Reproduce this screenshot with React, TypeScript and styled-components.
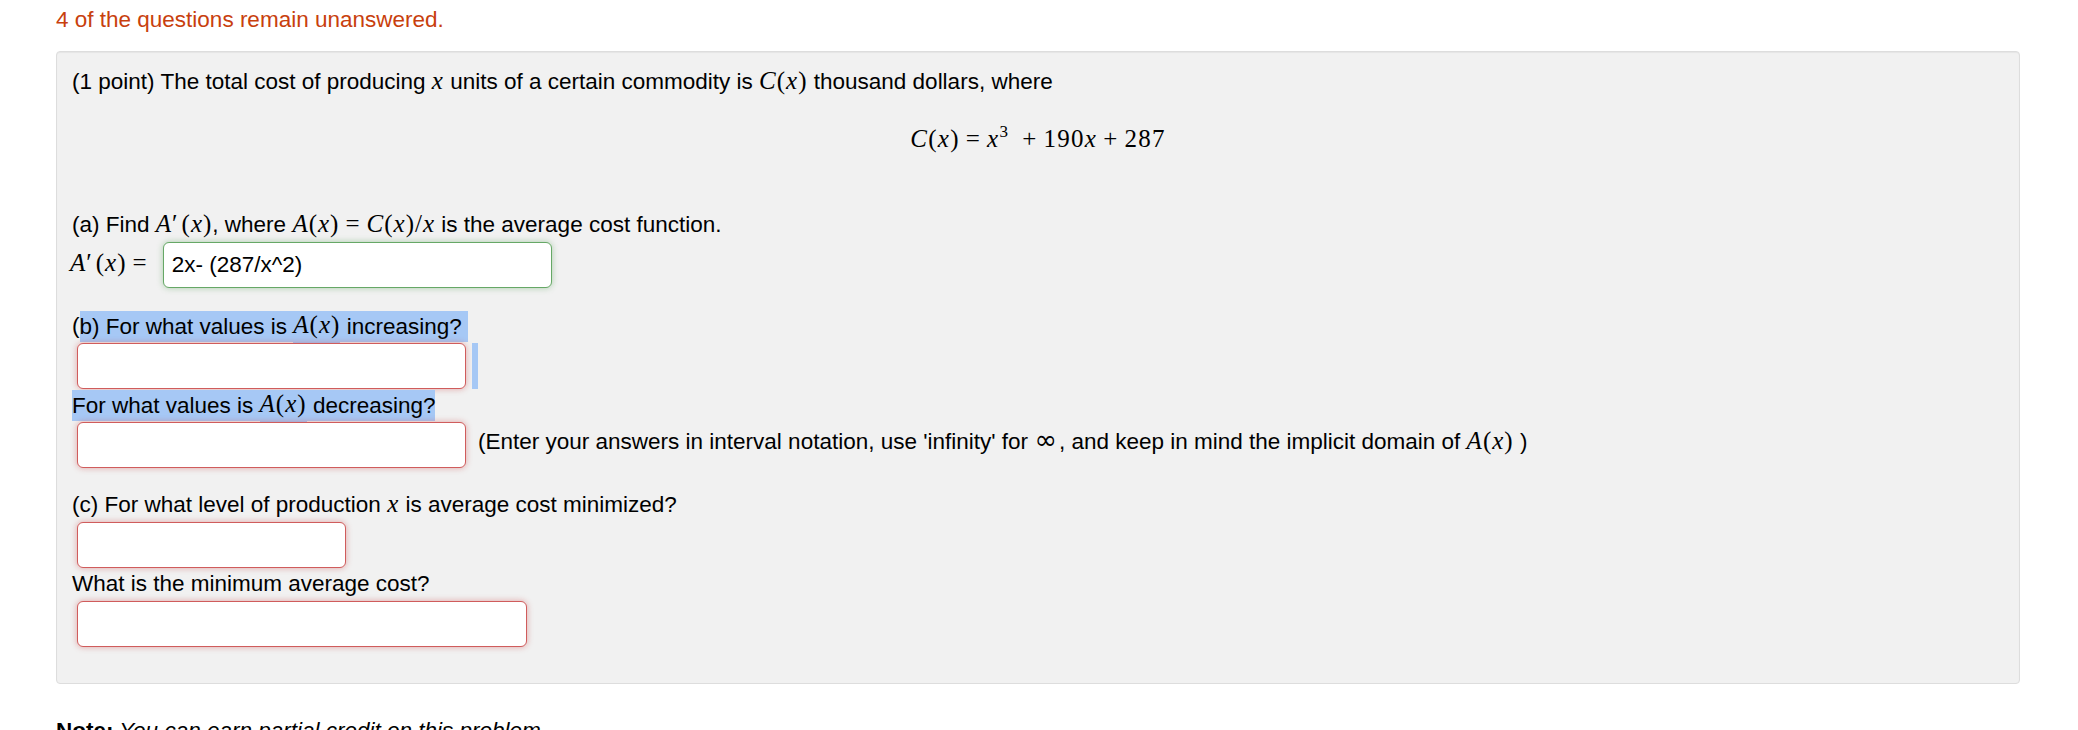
import React from "react";
import styled, { createGlobalStyle, css } from "styled-components";

const GlobalStyle = createGlobalStyle`
  html, body {
    margin: 0;
    padding: 0;
    background: #ffffff;
  }
  body {
    font-family: "Liberation Sans", Arial, Helvetica, sans-serif;
    font-size: 22.5px;
    color: #000000;
  }
`;

const selection = "#a6c8f5";

const Page = styled.div`
  box-sizing: border-box;
  width: 2078px;
  height: 730px;
  overflow: hidden;
  padding: 4px 58px 0 56px;
`;

const Warning = styled.div`
  color: #c8400d;
  line-height: 32px;
  margin-bottom: 15px;
`;

const Problem = styled.div`
  background: #f1f1f1;
  border: 1px solid #dddddd;
  border-radius: 4px;
  box-shadow: inset 0 1px 1px rgba(0, 0, 0, 0.05);
  padding: 14px 15px 36px;
`;

const Line = styled.div<{ $top?: number }>`
  height: 32px;
  line-height: 32px;
  white-space: nowrap;
  margin-top: ${({ $top }) => $top ?? 0}px;
`;

const Display = styled.div`
  height: 32px;
  font-family: "Liberation Serif", "Times New Roman", serif;
  font-size: 25px;
  line-height: 32px;
  letter-spacing: 0.05em;
  text-align: center;
  margin: 25px 0 54px;
`;

const M = styled.span<{ $sel?: boolean }>`
  font-family: "Liberation Serif", "Times New Roman", serif;
  font-size: 25px;
  line-height: 1;
  letter-spacing: 0.04em;
  ${({ $sel }) =>
    $sel &&
    css`
      background: ${selection};
      padding: 0 0 6px;
    `}
`;

const V = styled.i`
  font-style: italic;
`;

const Prime = styled.span`
  font-style: normal;
  margin-right: 3px;
`;

const Sup = styled.span`
  font-size: 17px;
  vertical-align: 10px;
  line-height: 0;
  margin-right: 7px;
`;

const Op = styled.span<{ $space: number }>`
  margin: 0 ${({ $space }) => $space}px;
`;

const Sel = styled.span`
  background: ${selection};
  padding: 2.5px 0 4px;
`;

const AnswerRow = styled.div<{ $top?: number }>`
  display: flex;
  align-items: center;
  height: 46px;
  margin-top: ${({ $top }) => $top ?? 1}px;
`;

const Label = styled.span`
  font-family: "Liberation Serif", "Times New Roman", serif;
  font-size: 25px;
  letter-spacing: 0.04em;
  line-height: 32px;
  padding-bottom: 5px;
  margin-left: -2px;
  white-space: nowrap;
`;

type Status = "correct" | "incorrect";

const Answer = styled.input<{ $width: number; $gap: number; $status: Status }>`
  box-sizing: border-box;
  flex: none;
  width: ${({ $width }) => $width}px;
  height: 46px;
  margin: 0 0 0 ${({ $gap }) => $gap}px;
  padding: 0 8px;
  font-family: "Liberation Sans", Arial, Helvetica, sans-serif;
  font-size: 22.5px;
  color: #000000;
  background: #ffffff;
  border-radius: 6px;
  outline: none;
  ${({ $status }) =>
    $status === "correct"
      ? css`
          border: 1px solid #66a866;
          box-shadow: 0 0 6px rgba(84, 160, 84, 0.45);
        `
      : css`
          border: 1px solid #d05c5c;
          box-shadow: 0 0 6px rgba(205, 70, 70, 0.45);
        `}
`;

const SelBar = styled.span`
  display: inline-block;
  width: 6px;
  height: 46px;
  margin-left: 6px;
  background: ${selection};
`;

const Hint = styled.span`
  margin-left: 12px;
  line-height: 32px;
  padding-bottom: 6px;
  white-space: nowrap;
`;

const Infinity = styled.span`
  font-family: "DejaVu Sans", sans-serif;
  font-size: 27px;
  line-height: 0;
  margin-right: 2px;
`;

const Note = styled.div`
  margin-top: 31px;
  line-height: 32px;
  white-space: nowrap;
  font-style: italic;
`;

const NoteLead = styled.b`
  font-style: normal;
`;

const Ax = ({ sel }: { sel?: boolean }) => (
  <M $sel={sel}>
    <V>A</V>(<V>x</V>)
  </M>
);

const App = () => (
  <Page>
    <GlobalStyle />
    <Warning>4 of the questions remain unanswered.</Warning>
    <Problem>
      <Line>
        (1 point) The total cost of producing <M><V>x</V></M> units of a
        certain commodity is{" "}
        <M>
          <V>C</V>(<V>x</V>)
        </M>{" "}
        thousand dollars, where
      </Line>
      <Display>
        <V>C</V>(<V>x</V>)<Op $space={6}>=</Op>
        <V>x</V>
        <Sup>3</Sup>
        <Op $space={6}>+</Op>190<V>x</V>
        <Op $space={6}>+</Op>287
      </Display>

      <Line>
        (a) Find{" "}
        <M>
          <V>A</V>
          <Prime>′</Prime>(<V>x</V>)
        </M>
        , where{" "}
        <M>
          <V>A</V>(<V>x</V>)<Op $space={6}>=</Op>
          <V>C</V>(<V>x</V>)/<V>x</V>
        </M>{" "}
        is the average cost function.
      </Line>
      <AnswerRow>
        <Label>
          <V>A</V>
          <Prime>′</Prime>(<V>x</V>)<Op $space={6}>=</Op>
        </Label>
        <Answer
          $width={389}
          $gap={9}
          $status="correct"
          defaultValue="2x- (287/x^2)"
          readOnly
        />
      </AnswerRow>

      <Line $top={22}>
        (<Sel>b) For what values is </Sel>
        <Ax sel />
        <Sel> increasing?{"\u00a0"}</Sel>
      </Line>
      <AnswerRow>
        <Answer $width={389} $gap={5} $status="incorrect" readOnly />
        <SelBar />
      </AnswerRow>

      <Line>
        <Sel>For what values is </Sel>
        <Ax sel />
        <Sel> decreasing?</Sel>
      </Line>
      <AnswerRow>
        <Answer $width={389} $gap={5} $status="incorrect" readOnly />
        <Hint>
          (Enter your answers in interval notation, use 'infinity' for{" "}
          <Infinity>∞</Infinity>, and keep in mind the implicit domain of{" "}
          <Ax /> )
        </Hint>
      </AnswerRow>

      <Line $top={21}>
        (c) For what level of production <M><V>x</V></M> is average cost
        minimized?
      </Line>
      <AnswerRow>
        <Answer $width={269} $gap={5} $status="incorrect" readOnly />
      </AnswerRow>

      <Line>What is the minimum average cost?</Line>
      <AnswerRow>
        <Answer $width={450} $gap={5} $status="incorrect" readOnly />
      </AnswerRow>
    </Problem>
    <Note>
      <NoteLead>Note:</NoteLead> You can earn partial credit on this problem
    </Note>
  </Page>
);

export default App;
